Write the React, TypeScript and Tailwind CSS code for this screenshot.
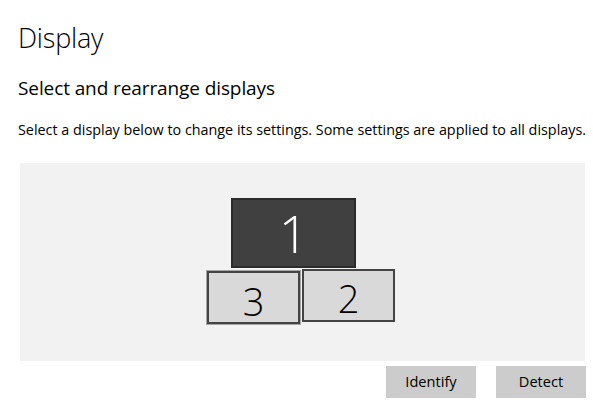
import React from "react";

function Monitor({ n, cls }: { n: string; cls: string }) {
  return (
    <div className={`absolute flex items-center justify-center ${cls}`}>
      <span className="font-light leading-none">{n}</span>
    </div>
  );
}

export default function App() {
  return (
    <div
      className="w-[593px] h-[409px] bg-white text-black overflow-hidden"
      style={{ fontFamily: '"Open Sans", "Noto Sans", sans-serif' }}
    >
      <div className="pl-[18px] pt-[20px]">
        <h1 className="text-[27px] font-light leading-[36px] tracking-[-0.2px]">Display</h1>
        <h2 className="mt-[19px] text-[19px] leading-[26px] tracking-[-0.1px]">Select and rearrange displays</h2>
        <p className="mt-[19px] text-[14.35px] leading-[20px] tracking-[0px]">
          Select a display below to change its settings. Some settings are applied to all displays.
        </p>
      </div>
      <div className="ml-[20px] mt-[23px] w-[565px] h-[198px] bg-[#f2f2f2] relative">
        <Monitor
          n="1"
          cls="left-[211px] top-[35px] w-[125px] h-[70px] bg-[#404040] border-2 border-[#2b2b2b] text-white text-[52px]"
        />
        <Monitor
          n="3"
          cls="left-[187px] top-[108px] w-[93px] h-[53px] bg-[#d9d9d9] border-2 border-[#444444] outline outline-1 outline-[#a6a6a6] text-black text-[38px] pt-[6px]"
        />
        <Monitor
          n="2"
          cls="left-[282px] top-[106px] w-[93px] h-[53px] bg-[#d9d9d9] border-2 border-[#444444] text-black text-[38px] pt-[4px]"
        />
      </div>
      <div className="flex justify-end gap-[20px] pr-[7px] mt-[5px]">
        <button className="w-[90px] h-[32px] bg-[#cccccc] text-[14.6px] tracking-[0px]">Identify</button>
        <button className="w-[90px] h-[32px] bg-[#cccccc] text-[14.6px] tracking-[0px]">Detect</button>
      </div>
    </div>
  );
}
